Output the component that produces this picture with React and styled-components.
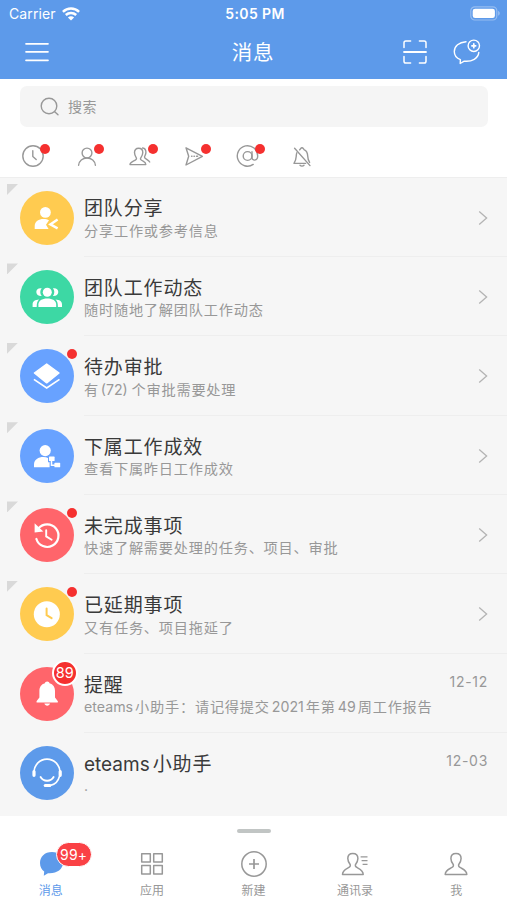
import styled, { createGlobalStyle } from "styled-components";

const themeColor = {
  blue: "#5d9aea",
  lightBlue: "#68a2ff",
  yellow: "#ffcb50",
  green: "#3dd8a4",
  coral: "#ff656b",
  red: "#f5302f",
  gray: "#989898",
  listGray: "#f6f6f6",
};

const ShareIcon = () => (
  <svg width="54" height="54" viewBox="0 0 54 54" fill="#fff">
    <circle cx="25.4" cy="21.4" r="5.4" />
    <path d="M14.7 38 V35 C14.7 30.5 18.8 28 23.5 28 C25.7 28 27.6 28.4 29 29.2 L26 33.7 L28.6 38 Z" />
    <path
      d="M37.6 28.6 L30.4 33.4 L37.6 37.4"
      fill="none"
      stroke="#fff"
      strokeWidth="2.4"
    />
  </svg>
);

const TeamIcon = () => (
  <svg width="54" height="54" viewBox="0 0 54 54" fill="#fff">
    <circle cx="27.3" cy="22.2" r="4.5" />
    <path d="M21.7 18.3 C19.8 20.5 19.8 23.8 21.7 26 C18.4 26.2 16.3 24.5 16.3 22 C16.3 19.4 18.6 17.7 21.7 18.3 Z" />
    <path d="M32.9 18.3 C34.8 20.5 34.8 23.8 32.9 26 C36.2 26.2 38.3 24.5 38.3 22 C38.3 19.4 36 17.7 32.9 18.3 Z" />
    <path d="M18.4 37 V34.5 C18.4 30.5 22 28.4 27.3 28.4 C32.6 28.4 36.2 30.5 36.2 34.5 V37 Z" />
    <path d="M12.6 37 V34.5 C12.6 31.4 15.2 29.8 19.1 29.6 C17.4 31 16.7 32.8 16.7 37 Z" />
    <path d="M42 37 V34.5 C42 31.4 39.4 29.8 35.5 29.6 C37.2 31 37.9 32.8 37.9 37 Z" />
  </svg>
);

const LayersIcon = () => (
  <svg width="54" height="54" viewBox="0 0 54 54" fill="#fff">
    <path
      d="M26.7 15 L39 24 L26.7 33.9 L14.4 24 Z"
      stroke="#fff"
      strokeWidth="1.4"
      strokeLinejoin="round"
    />
    <path
      d="M13.9 30.4 L26.7 39 L39.5 30.4"
      fill="none"
      stroke="#fff"
      strokeWidth="1.7"
    />
  </svg>
);

const SubordinateIcon = () => (
  <svg width="54" height="54" viewBox="0 0 54 54" fill="#fff">
    <circle cx="25.2" cy="21.6" r="5.6" />
    <path d="M14 38.3 V35.5 C14 30.6 18.5 28 23.3 28 C25.2 28 26.8 28.3 28 28.9 V33.3 H29.6 V38.3 Z" />
    <rect x="29" y="27.6" width="5.6" height="4.4" rx="0.6" />
    <rect x="34.4" y="33.8" width="5.8" height="4.5" rx="0.6" />
    <path
      d="M31.5 31 V36.2 H35"
      fill="none"
      stroke="#fff"
      strokeWidth="1.5"
    />
  </svg>
);

const HistoryIcon = () => (
  <svg width="54" height="54" viewBox="0 0 54 54" fill="none" stroke="#fff">
    <path
      d="M18.5 20.4 A11.3 11.3 0 1 1 16.4 31"
      strokeWidth="2.2"
      strokeLinecap="round"
    />
    <path d="M14.6 15.3 L23.3 23.6 L14.6 24.4 Z" fill="#fff" stroke="none" />
    <path
      d="M26.2 22.2 V28.4 L31.6 31.8"
      strokeWidth="1.9"
      strokeLinecap="round"
    />
  </svg>
);

const DelayIcon = () => (
  <svg width="54" height="54" viewBox="0 0 54 54" fill="none">
    <circle cx="26.8" cy="27.3" r="13" fill="#fff" />
    <path
      d="M26.6 21.5 V28.2 L31.6 31.2"
      stroke={themeColor.yellow}
      strokeWidth="2"
      strokeLinecap="round"
    />
  </svg>
);

const BellIcon = () => (
  <svg width="54" height="54" viewBox="0 0 54 54" fill="#fff">
    <path d="M27.2 14.4 C28.5 14.4 29.3 15.2 29.5 16.2 C33.2 17.2 35 20.2 35 24 V30.4 L37.7 34 C38.2 34.9 37.9 35.6 37 35.6 H17.4 C16.5 35.6 16.2 34.9 16.7 34 L19.4 30.4 V24 C19.4 20.2 21.2 17.2 24.9 16.2 C25.1 15.2 25.9 14.4 27.2 14.4 Z" />
    <path d="M24.4 36.6 H30 C29.6 38 28.6 38.7 27.2 38.7 C25.8 38.7 24.8 38 24.4 36.6 Z" />
  </svg>
);

const HeadsetIcon = () => (
  <svg
    width="54"
    height="54"
    viewBox="0 0 54 54"
    fill="none"
    stroke="#fff"
    strokeLinecap="round"
  >
    <path d="M14 26.5 C14.2 18.6 19.8 13.1 27 13.1 C34.2 13.1 39.8 18.6 40 26.5" strokeWidth="1.6" />
    <path d="M14 25.6 V29.3 M40.2 25.6 V29.3" strokeWidth="3.2" />
    <path d="M39.6 30 C38.2 35.4 35 38.6 30.4 39.4" strokeWidth="1.6" />
    <path d="M25.2 39.5 H29.8" strokeWidth="3" />
    <path d="M20.6 31 C23.4 35.9 30.8 35.9 33.6 31" strokeWidth="1.9" />
  </svg>
);

const FilterSvg = ({ children }) => (
  <svg
    width="24"
    height="24"
    viewBox="0 0 24 24"
    fill="none"
    stroke={themeColor.gray}
    strokeWidth="1.4"
    strokeLinecap="round"
    strokeLinejoin="round"
  >
    {children}
  </svg>
);

const filters = [
  {
    name: "recent",
    dot: true,
    icon: (
      <FilterSvg>
        <circle cx="12" cy="12" r="10.2" />
        <path d="M11.8 6.8 V12.4 L15.2 15.6" />
      </FilterSvg>
    ),
  },
  {
    name: "person",
    dot: true,
    icon: (
      <FilterSvg>
        <circle cx="12" cy="9" r="4.9" />
        <path d="M3.6 21.3 C3.9 17 7.6 14 12 14 C16.4 14 20.1 17 20.4 21.3" />
      </FilterSvg>
    ),
  },
  {
    name: "group",
    dot: true,
    icon: (
      <FilterSvg>
        <path d="M10.6 4.2 C7.9 4.2 6.5 6 6.5 8.6 C6.5 10.9 7.5 12.6 8.3 13.8 C8.8 14.8 8.3 15.6 6.9 16.3 C4.5 17.6 2 18 2 20.6 H17.8 C17.8 18 15.8 17.6 14 16.5 C12.4 15.6 12.1 14.8 12.8 13.8 C13.8 12.4 14.8 10.9 14.8 8.6 C14.8 6 13.3 4.2 10.6 4.2 Z" />
        <path d="M14.6 4 C17.2 4.3 18 6.2 17.9 8.6 C17.8 10.5 16.8 11.7 16.5 13 C16.3 14.6 20.3 15.7 21.7 18" />
      </FilterSvg>
    ),
  },
  {
    name: "sent",
    dot: true,
    icon: (
      <FilterSvg>
        <path d="M4 3.8 L20.4 12.3 L4 21 L6.7 12.3 Z" />
        <path d="M9.6 12.3 H10 M12 12.3 H12.4 M14.5 12.3 H15.6" />
      </FilterSvg>
    ),
  },
  {
    name: "mention",
    dot: true,
    icon: (
      <FilterSvg>
        <circle cx="11.6" cy="12" r="4.4" />
        <path d="M16 7.8 V13.4 C16 17.3 21.6 17.2 21.7 12 A10.2 10.2 0 1 0 17.2 20.4" />
      </FilterSvg>
    ),
  },
  {
    name: "muted",
    dot: false,
    icon: (
      <FilterSvg>
        <path d="M9.6 5.8 C10.5 5.2 10.8 3.8 12 3.8 C13.2 3.8 13.5 5.2 14.4 5.8 C16.8 7 17.6 9 17.7 12 C17.8 15 18.4 16.5 19.6 18.4" />
        <path d="M6.8 8.8 C6.3 10 6.3 11.2 6.2 12.6 C6.1 15.6 5.3 17.2 4 19.4 H15.6" />
        <path d="M4.6 4.2 L20 21.6" />
        <path d="M10 21.3 C11 22.3 13 22.3 14 21.3" />
      </FilterSvg>
    ),
  },
];

const messages = [
  { title: "团队分享", sub: "分享工作或参考信息", color: themeColor.yellow, icon: <ShareIcon />, pinned: true },
  { title: "团队工作动态", sub: "随时随地了解团队工作动态", color: themeColor.green, icon: <TeamIcon />, pinned: true },
  { title: "待办审批", sub: "有 (72) 个审批需要处理", color: themeColor.lightBlue, icon: <LayersIcon />, pinned: true, dot: true },
  { title: "下属工作成效", sub: "查看下属昨日工作成效", color: themeColor.lightBlue, icon: <SubordinateIcon />, pinned: true },
  { title: "未完成事项", sub: "快速了解需要处理的任务、项目、审批", color: themeColor.coral, icon: <HistoryIcon />, pinned: true, dot: true },
  { title: "已延期事项", sub: "又有任务、项目拖延了", color: themeColor.yellow, icon: <DelayIcon />, pinned: true, dot: true },
  { title: "提醒", sub: "eteams小助手：请记得提交2021年第49周工作报告", color: themeColor.coral, icon: <BellIcon />, count: 89, date: "12-12" },
  { title: "eteams小助手", sub: ".", color: themeColor.blue, icon: <HeadsetIcon />, date: "12-03" },
];

// latin words and numbers are set tighter than the Chinese around them
const renderMixed = (text) =>
  text
    .split(/([A-Za-z0-9()]+)/)
    .map((part, idx) => (idx % 2 ? <Latin key={idx}>{part}</Latin> : part));

const TabSvg = ({ children }) => (
  <svg
    width="30"
    height="28"
    viewBox="0 0 30 28"
    fill="none"
    stroke={themeColor.gray}
    strokeWidth="1.5"
    strokeLinejoin="round"
  >
    {children}
  </svg>
);

const tabs = [
  {
    name: "消息",
    active: true,
    badge: "99+",
    icon: (
      <TabSvg>
        <path
          d="M16 1.9 C8.6 1.9 4 6.6 4 13 C4 17 5.7 19.6 8.2 21.4 L7.8 25.8 L12 23.2 C20.6 23.8 26.4 20 27.4 12.6 C27.4 6 22.8 1.9 16 1.9 Z"
          fill={themeColor.blue}
          stroke="none"
        />
      </TabSvg>
    ),
  },
  {
    name: "应用",
    icon: (
      <TabSvg>
        <rect x="4.7" y="3.7" width="8.6" height="8.4" />
        <rect x="16.7" y="3.7" width="8.6" height="8.4" />
        <rect x="4.7" y="15.6" width="8.6" height="8.4" />
        <rect x="16.7" y="15.6" width="8.6" height="8.4" />
      </TabSvg>
    ),
  },
  {
    name: "新建",
    icon: (
      <TabSvg>
        <circle cx="15" cy="14" r="12.2" />
        <path d="M15 9 V19 M10 14 H20" strokeWidth="1.7" />
      </TabSvg>
    ),
  },
  {
    name: "通讯录",
    icon: (
      <TabSvg>
        <path d="M12.8 3.5 C9.6 3.5 7.8 5.5 7.8 8.6 C7.8 11 9 12.9 10 14.2 C10.8 15.6 10.2 16.7 8.4 17.7 C5.4 19.3 2.5 20.5 2.5 24.4 H23.2 C23.2 20.5 20.3 19.3 17.3 17.7 C15.4 16.7 14.9 15.6 15.7 14.2 C16.7 12.9 17.9 11 17.9 8.6 C17.9 5.5 16 3.5 12.8 3.5 Z" />
        <path d="M20.6 6.8 H27.5 M21.6 10.6 H27.5 M22.6 14.3 H27.5" strokeWidth="1.3" />
      </TabSvg>
    ),
  },
  {
    name: "我",
    icon: (
      <TabSvg>
        <path d="M15 3.5 C11.8 3.5 9.9 5.5 9.9 8.6 C9.9 11 11.1 12.9 12.1 14.2 C12.9 15.6 12.3 16.7 10.5 17.7 C7.5 19.3 4.2 20.5 4.2 24.4 H25.8 C25.8 20.5 22.5 19.3 19.5 17.7 C17.7 16.7 17.1 15.6 17.9 14.2 C18.9 12.9 20.1 11 20.1 8.6 C20.1 5.5 18.2 3.5 15 3.5 Z" />
      </TabSvg>
    ),
  },
];

const App = () => {
  return (
    <>
      <GlobalStyle />
      <Screen>
        <Header>
          <StatusBar>
            <Carrier>
              Carrier
              <svg width="18" height="14" viewBox="0 0 18 14" fill="none" stroke="#fff" strokeWidth="2.5">
                <path d="M0.9 4.9 C5.5 0.5 12.5 0.5 17.1 4.9" />
                <path d="M3.8 8 C6.8 5.2 11.2 5.2 14.2 8" />
                <path d="M9 13.6 L5.9 10.4 C7.7 8.9 10.3 8.9 12.1 10.4 Z" fill="#fff" stroke="none" />
              </svg>
            </Carrier>
            <Clock>5:05 PM</Clock>
            <svg width="31" height="15" viewBox="0 0 31 15">
              <rect x="0.8" y="0.8" width="26" height="13.2" rx="4" fill="none" stroke="#fff" strokeOpacity="0.35" strokeWidth="1.2" />
              <rect x="2.7" y="2.7" width="22.2" height="9.4" rx="2.4" fill="#fff" />
              <path d="M28.2 5 C30.2 5.7 30.2 9 28.2 9.7 Z" fill="#fff" fillOpacity="0.4" />
            </svg>
          </StatusBar>
          <NavBar>
            <svg width="24" height="20" viewBox="0 0 24 20" stroke="#fff" strokeWidth="1.7" strokeLinecap="round">
              <path d="M1 1.8 H23 M1 9.8 H23 M1 18.3 H23" />
            </svg>
            <h1>消息</h1>
            <NavActions>
              <svg width="24" height="24" viewBox="0 0 24 24" fill="none" stroke="#fff" strokeWidth="1.5" strokeLinecap="round">
                <path d="M1 7.6 V2.8 Q1 1 2.8 1 H7.6 M16.4 1 H21.2 Q23 1 23 2.8 V7.6 M23 16.4 V21.2 Q23 23 21.2 23 H16.4 M7.6 23 H2.8 Q1 23 1 21.2 V16.4" />
                <path d="M1 12 H23" strokeWidth="1.8" />
              </svg>
              <svg width="28" height="26" viewBox="0 0 28 26" fill="none" stroke="#fff" strokeWidth="1.4" strokeLinecap="round" strokeLinejoin="round">
                <path d="M13 2.7 C6 3.2 1.3 7 1.3 12.6 C1.3 16.2 3.4 19.2 7.4 20.6 L7.2 24.5 L11.2 22.2 C19 23 25.3 19.3 25.8 13.4" />
                <circle cx="20.8" cy="6.8" r="5.7" />
                <path d="M20.8 4.9 V8.7 M18.9 6.8 H22.7" strokeWidth="1.7" />
              </svg>
            </NavActions>
          </NavBar>
        </Header>
        <SearchBox>
          <svg width="20" height="20" viewBox="0 0 20 20" fill="none" stroke={themeColor.gray} strokeWidth="1.4" strokeLinecap="round">
            <circle cx="9" cy="9" r="7.8" />
            <path d="M14.7 14.7 L18 17.8" />
          </svg>
          <span>搜索</span>
        </SearchBox>
        <FilterBar>
          {filters.map((filter) => (
            <FilterItem key={filter.name}>
              {filter.icon}
              {filter.dot && <FilterDot />}
            </FilterItem>
          ))}
        </FilterBar>
        <MessageList>
          {messages.map((message) => (
            <MessageItem key={message.title}>
              {message.pinned && <PinCorner />}
              <Avatar $color={message.color}>
                {message.icon}
                {message.dot && <AvatarDot />}
                {message.count && <CountBadge>{message.count}</CountBadge>}
              </Avatar>
              <MessageBody>
                <MessageText>
                  <h2>{renderMixed(message.title)}</h2>
                  <p>{renderMixed(message.sub)}</p>
                </MessageText>
                {message.date ? (
                  <DateText>{message.date}</DateText>
                ) : (
                  <Arrow width="10" height="16" viewBox="0 0 10 16">
                    <path d="M1.2 1.5 L8.6 8 L1.2 14.5" />
                  </Arrow>
                )}
              </MessageBody>
            </MessageItem>
          ))}
        </MessageList>
        <TabBar>
          <Handle />
          <TabRow>
            {tabs.map((tab) => (
              <TabItem key={tab.name} $active={tab.active}>
                {tab.icon}
                <span>{tab.name}</span>
                {tab.badge && <TabBadge>{tab.badge}</TabBadge>}
              </TabItem>
            ))}
          </TabRow>
        </TabBar>
      </Screen>
    </>
  );
};

export default App;

const GlobalStyle = createGlobalStyle`
  * {
    box-sizing: border-box;
  }

  body {
    margin: 0;
    font-family: Inter, "Noto Sans CJK SC", sans-serif;
    background-color: #fff;
  }

  h1, h2, p, ul {
    margin: 0;
    padding: 0;
    font-weight: 400;
  }

  svg {
    display: block;
    flex-shrink: 0;
  }
`;

const Screen = styled.div`
  display: flex;
  flex-direction: column;
  width: 507px;
  height: 900px;
  overflow: hidden;
`;

const Header = styled.header`
  flex: none;
  height: 79px;
  color: #fff;
  background-color: ${themeColor.blue};
`;

const StatusBar = styled.div`
  display: grid;
  grid-template-columns: 1fr auto 1fr;
  align-items: center;
  height: 27px;
  padding: 0 6px 0 9px;

  > svg {
    justify-self: end;
  }
`;

const Carrier = styled.div`
  display: flex;
  align-items: center;
  gap: 6px;
  font-size: 14px;
  letter-spacing: 0.1px;
`;

const Clock = styled.div`
  font-size: 14px;
  font-weight: 600;
  letter-spacing: 0.4px;
`;

const NavBar = styled.div`
  display: grid;
  grid-template-columns: 1fr auto 1fr;
  align-items: center;
  height: 50px;
  padding: 0 26px 0 25px;

  h1 {
    padding-top: 2px;
    font-size: 20.5px;
    line-height: 30px;
    letter-spacing: 0.8px;
  }
`;

const NavActions = styled.div`
  display: flex;
  justify-content: flex-end;
  align-items: center;
  gap: 26px;
`;

const SearchBox = styled.div`
  display: flex;
  flex: none;
  align-items: center;
  gap: 8px;
  height: 41px;
  margin: 7px 19px 0 20px;
  padding-left: 20px;
  border-radius: 7px;
  font-size: 14px;
  letter-spacing: 0.5px;
  color: ${themeColor.gray};
  background-color: #f5f5f5;

  span {
    padding-bottom: 2px;
  }
`;

const FilterBar = styled.div`
  display: flex;
  flex: none;
  height: 50.6px;
  padding: 2px 0 0 6px;
  border-bottom: 1px solid #eeeeee;
`;

const FilterItem = styled.div`
  position: relative;
  display: flex;
  justify-content: center;
  padding-top: 15px;
  width: 53.75px;
`;

const FilterDot = styled.span`
  position: absolute;
  top: 15px;
  left: 34px;
  width: 10px;
  height: 10px;
  border-radius: 50%;
  background-color: ${themeColor.red};
`;

const MessageList = styled.ul`
  flex: none;
  height: 638.4px;
  list-style: none;
  background-color: ${themeColor.listGray};
`;

const MessageItem = styled.li`
  position: relative;
  display: flex;
  height: 79.35px;
  padding-left: 20.3px;
`;

const PinCorner = styled.span`
  position: absolute;
  top: 6.5px;
  left: 7px;
  width: 11px;
  height: 11px;
  background-color: #d9d9d9;
  clip-path: polygon(0 0, 100% 0, 0 100%);
`;

const Avatar = styled.div`
  position: relative;
  flex: none;
  width: 54px;
  height: 54px;
  margin-top: 13px;
  border-radius: 50%;
  background-color: ${(props) => props.$color};
`;

const AvatarDot = styled.span`
  position: absolute;
  top: 0;
  right: -2.5px;
  width: 10px;
  height: 10px;
  border-radius: 50%;
  background-color: ${themeColor.red};
`;

const CountBadge = styled.span`
  position: absolute;
  top: -7px;
  right: -3.5px;
  width: 26px;
  height: 26px;
  border: 2px solid #fff;
  border-radius: 50%;
  font-size: 14.5px;
  line-height: 22px;
  text-align: center;
  color: #fff;
  background-color: ${themeColor.red};
`;

const MessageBody = styled.div`
  display: flex;
  flex: 1;
  justify-content: space-between;
  margin-left: 9.7px;
  padding-right: 19px;
  border-bottom: 1px solid #eeeeee;

  ${MessageItem}:last-child & {
    border-bottom: none;
  }
`;

const Latin = styled.span`
  margin: 0 2px;
  letter-spacing: 0;

  &:first-child {
    margin-left: 0;
  }
`;

const MessageText = styled.div`
  padding-top: 19.9px;
  white-space: nowrap;

  h2 {
    font-size: 19px;
    line-height: 24px;
    letter-spacing: 0.85px;
    color: #3a3a3a;
  }

  h2 ${Latin} {
    margin: 0 3px 0 0;
  }

  p {
    margin-top: -1.5px;
    font-size: 14.2px;
    line-height: 22px;
    letter-spacing: 0.78px;
    word-spacing: -3px;
    color: ${themeColor.gray};
  }

  p ${Latin}:first-child {
    margin-left: 0;
  }
`;

const DateText = styled.span`
  padding-top: 18px;
  font-size: 14px;
  line-height: 20px;
  letter-spacing: 0.7px;
  color: ${themeColor.gray};
`;

const Arrow = styled.svg`
  margin-top: 32px;
  fill: none;
  stroke: #b4b4b4;
  stroke-width: 1.3;
`;

const TabBar = styled.nav`
  display: flex;
  flex: 1;
  flex-direction: column;
  align-items: center;
  padding-top: 13px;
  background-color: #fff;
`;

const Handle = styled.div`
  width: 34px;
  height: 4px;
  border-radius: 2px;
  background-color: #c1c5c4;
`;

const TabRow = styled.div`
  display: flex;
  width: 100%;
  margin-top: 17.5px;
`;

const TabItem = styled.div`
  position: relative;
  display: flex;
  flex: 1;
  flex-direction: column;
  align-items: center;
  font-size: 12px;
  line-height: 18px;
  color: ${(props) => (props.$active ? themeColor.blue : themeColor.gray)};

  span {
    margin-top: 4px;
  }
`;

const TabBadge = styled.div`
  position: absolute;
  top: -8px;
  left: 55.5px;
  height: 25px;
  padding: 0 3.5px;
  border: 1px solid #fff;
  border-radius: 13px;
  font-size: 14px;
  line-height: 23px;
  letter-spacing: 0.2px;
  color: #fff;
  background-color: #fa4145;
`;
